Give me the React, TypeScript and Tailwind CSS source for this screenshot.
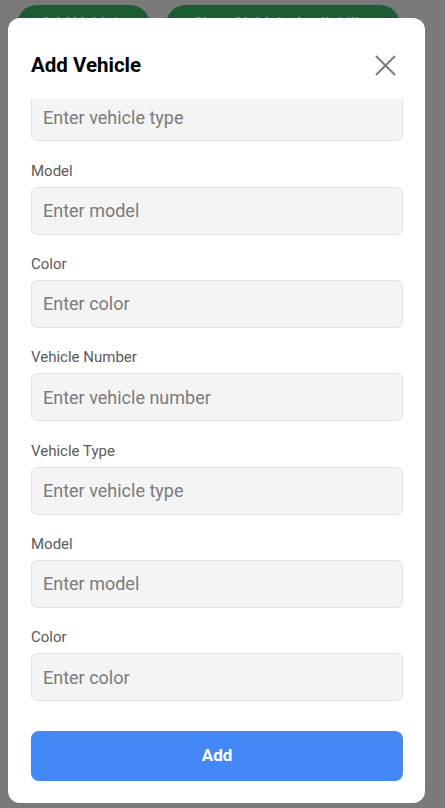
import { useEffect, useRef } from "react";

const fields = [
  { label: "Vehicle Number", placeholder: "Enter vehicle number" },
  { label: "Vehicle Type", placeholder: "Enter vehicle type" },
  { label: "Model", placeholder: "Enter model" },
  { label: "Color", placeholder: "Enter color" },
  { label: "Vehicle Number", placeholder: "Enter vehicle number" },
  { label: "Vehicle Type", placeholder: "Enter vehicle type" },
  { label: "Model", placeholder: "Enter model" },
  { label: "Color", placeholder: "Enter color" },
];

export default function App() {
  const scrollRef = useRef<HTMLDivElement>(null);

  useEffect(() => {
    // form is scrolled down a bit, like in the screenshot
    if (scrollRef.current) scrollRef.current.scrollTop = 125;
  }, []);

  return (
    <div
      className="relative h-[808px] w-full overflow-hidden bg-[#7a7a7a]"
      style={{ fontFamily: "Roboto, 'Noto Sans', sans-serif" }}
    >
      {/* page behind the modal */}
      <div className="flex gap-4 pl-[17px] pt-[5px]">
        <button className="flex h-[40px] w-[133px] items-start justify-center rounded-[20px] bg-[#1b5c34] text-[16px] font-bold leading-[20px] text-[#8c8c8c]">
          <span className="mt-[9px]">Add Vehicle</span>
        </button>
        <button className="flex h-[40px] w-[234px] items-start justify-center rounded-[20px] bg-[#1b5c34] text-[16px] font-bold leading-[20px] text-[#8c8c8c]">
          <span className="mt-[9px]">Show Vehicle Availability</span>
        </button>
      </div>

      {/* modal */}
      <div className="absolute left-[8px] top-[18px] flex h-[785px] w-[417px] flex-col rounded-[12px] bg-white">
        <div className="mt-[35px] mb-[22px] flex h-[24px] items-center justify-between pl-[23px] pr-[28px]">
          <h2 className="text-[20.5px] font-bold text-black">Add Vehicle</h2>
          <button className="flex h-[24px] w-[24px] items-center justify-center">
            <svg width="21" height="21" viewBox="0 0 22 22" fill="none" stroke="#7a7a7a" strokeWidth="2">
              <path d="M1 1 L21 21 M21 1 L1 21" />
            </svg>
          </button>
        </div>

        <div
          ref={scrollRef}
          className="flex-1 overflow-y-auto px-[23px] pr-[22px] [scrollbar-width:none]"
        >
          <div className="pb-[8px]">
            {fields.map((f, i) => (
              <div key={i} className="mb-[19.33px]">
                <label className="mb-[6px] block h-[20px] text-[15px] leading-[20px] text-[#5a5a5a]">
                  {f.label}
                </label>
                <input
                  type="text"
                  placeholder={f.placeholder}
                  className="h-[48px] w-full rounded-[6px] border border-[#e3e3e3] bg-[#f4f4f4] px-[11px] text-[18px] outline-none placeholder:text-[#7b7b7b]"
                />
              </div>
            ))}
          </div>
        </div>

        <div className="px-[23px] pr-[22px] pt-[11px] pb-[22px]">
          <button className="h-[50px] w-full rounded-[8px] bg-[#4487f6] text-[17px] font-bold text-white">
            Add
          </button>
        </div>
      </div>
    </div>
  );
}
